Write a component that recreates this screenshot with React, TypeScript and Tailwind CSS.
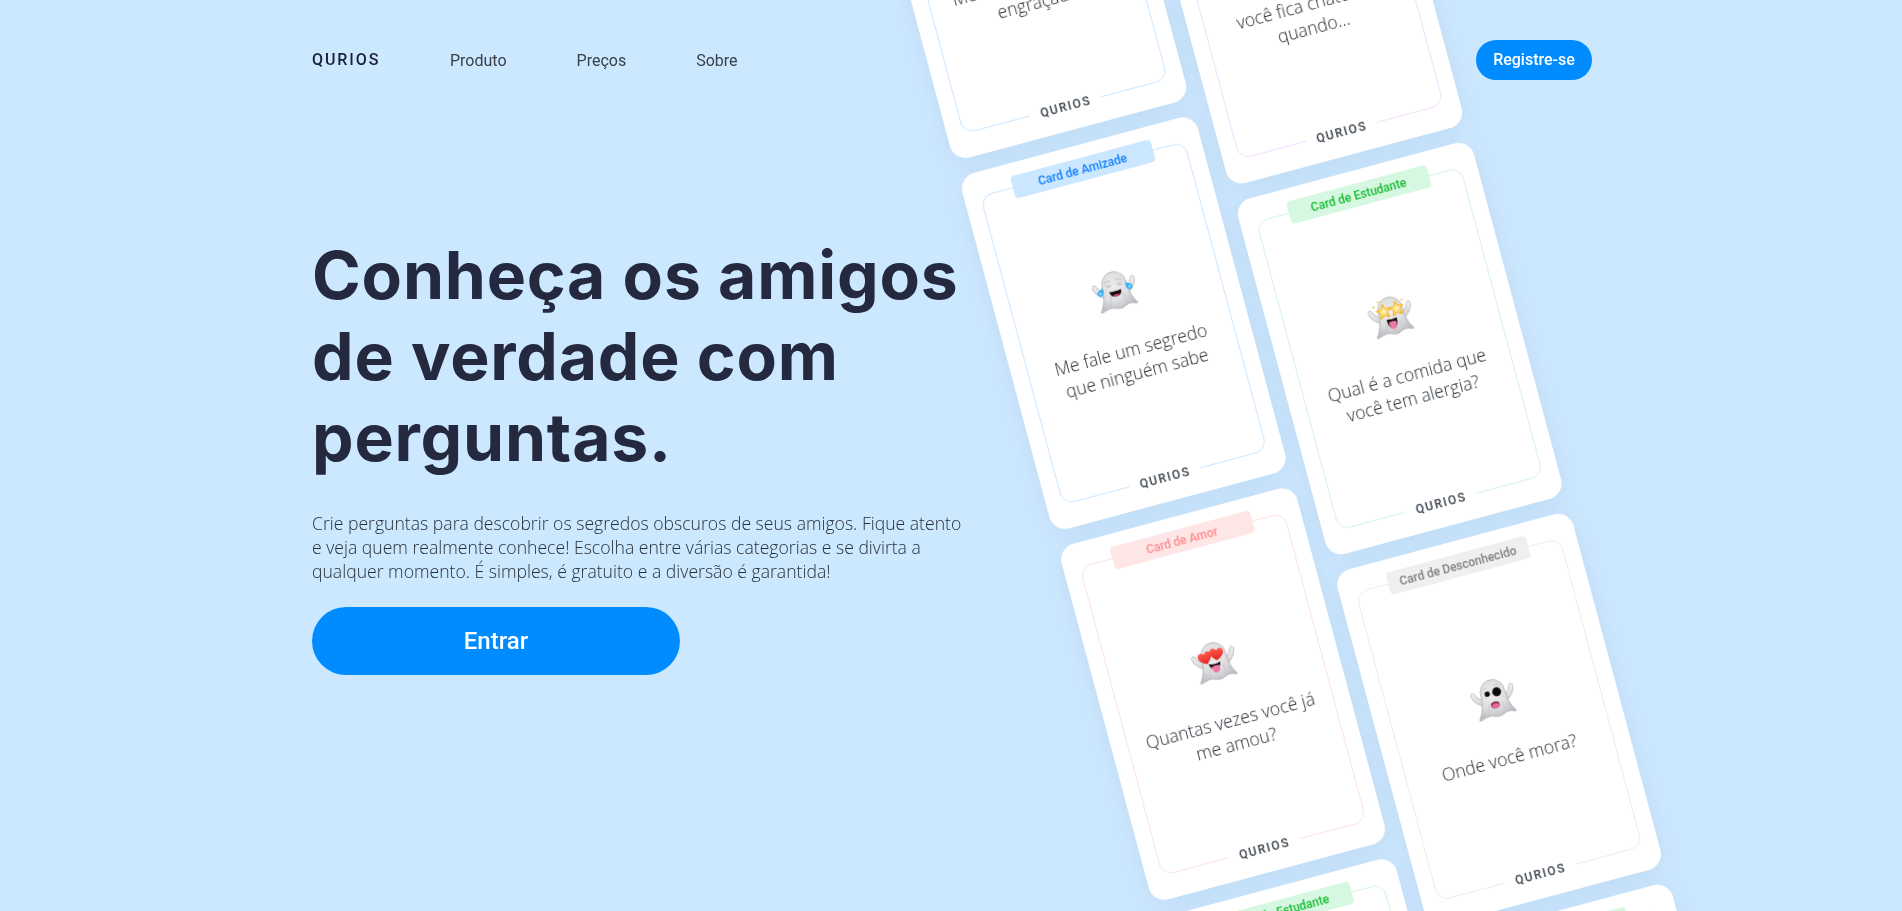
import type { ReactNode } from "react";

type Mood = "laugh" | "stars" | "hearts" | "shock";

type Theme = { label: string; border: string; tag: string };

const themes = {
  friendship: {
    label: "Card de Amizade",
    border: "border-[#c9e6ff]",
    tag: "bg-[#cbe7ff] text-[#1380ff]",
  },
  student: {
    label: "Card de Estudante",
    border: "border-[#d3f6dd]",
    tag: "bg-[#d7f8e0] text-[#17bb35]",
  },
  love: {
    label: "Card de Amor",
    border: "border-[#ffe2e2]",
    tag: "bg-[#ffe6e6] text-[#ff8c8c]",
  },
  stranger: {
    label: "Card de Desconhecido",
    border: "border-[#ededed]",
    tag: "bg-[#efefef] text-[#808080]",
  },
  crush: {
    label: "Card de Crush",
    border: "border-[#f5dcff]",
    tag: "bg-[#f7e3ff] text-[#c56bf0]",
  },
} satisfies Record<string, Theme>;

type CardData = { theme: Theme; mood: Mood; lines: string[] };

const columns: CardData[][] = [
  [
    { theme: themes.friendship, mood: "laugh", lines: ["Mostre uma imagem", "engraçada"] },
    { theme: themes.friendship, mood: "laugh", lines: ["Me fale um segredo", "que ninguém sabe"] },
    { theme: themes.love, mood: "hearts", lines: ["Quantas vezes você já", "me amou?"] },
    { theme: themes.student, mood: "stars", lines: ["Qual é a comida que", "você tem alergia?"] },
  ],
  [
    { theme: themes.crush, mood: "hearts", lines: ["você fica chateado", "quando..."] },
    { theme: themes.student, mood: "stars", lines: ["Qual é a comida que", "você tem alergia?"] },
    { theme: themes.stranger, mood: "shock", lines: ["Onde você mora?"] },
    { theme: themes.student, mood: "stars", lines: ["Qual é a comida que", "você tem alergia?"] },
  ],
];

const star = "M0-7.4 2-2.5 7.2-2.2 3.2 1.2 4.5 6.3 0 3.5-4.5 6.3-3.2 1.2-7.2-2.2-2-2.5Z";
const heart = "M0 6C-3.6 3.8-6.3 1.2-6.3-1.9-6.3-5.6-1.8-6.5 0-3.2 1.8-6.5 6.3-5.6 6.3-1.9 6.3 1.2 3.6 3.8 0 6Z";
const spark = "M0-2 .5-.5 2 0 .5.5 0 2-.5.5-2 0-.5-.5Z";

const faces: Record<Mood, ReactNode> = {
  laugh: (
    <>
      <path
        d="M-8.5-11.6q3-1.6 6-.6M3-12.2q3-1 5.6.8M-8-8.8l5.6 1.4-5.2 1.2M8.6-8.8 3-7.4l5 1.2"
        fill="none"
        stroke="#bcbcc2"
        strokeWidth=".9"
        strokeLinecap="round"
      />
      <path d="M-6-1.8Q0-.8 6.2-1.8 6 4.2.1 4.2T-6-1.8Z" fill="#170b10" />
      <path d="M-3.7 2.8Q0 1.2 3.9 2.8 2.4 4.2.1 4.2T-3.7 2.8Z" fill="#d9486f" />
      <path d="M-11.6-7.6C-13-6-17.6-5.6-18-2.4-18.2.8-14.4 1.6-12.6-.4-11.2-2.2-11.4-5-11.6-7.6Z" fill="#35b0f0" />
      <path d="M11.8-7.6C13.2-6 17.8-5.6 18.2-2.4 18.4.8 14.6 1.6 12.8-.4 11.4-2.2 11.6-5 11.8-7.6Z" fill="#35b0f0" />
      <circle cx="-15" cy="-2.2" r="1.3" fill="#a6e1ff" />
      <circle cx="15.2" cy="-2.2" r="1.3" fill="#a6e1ff" />
    </>
  ),
  stars: (
    <>
      <g fill="url(#starFill)" stroke="#f2b224" strokeWidth=".9" strokeLinejoin="round">
        <path d={star} transform="translate(-5.8 -7.6) scale(1.05)" />
        <path d={star} transform="translate(7.2 -7.6) scale(1.05)" />
      </g>
      <g fill="#f8cf5a">
        <path d={spark} transform="translate(-9 -18.6)" />
        <path d={spark} transform="translate(-14.6 -14.4)" />
        <path d={spark} transform="translate(14.4 -14.8)" />
        <path d={spark} transform="translate(17 -2.4)" />
      </g>
      <path d="M-5.2.8Q0 2 5.2.8 5.4 10.4 0 10.6T-5.2.8Z" fill="#170b10" />
      <path d="M-3.9 4.2Q0 2.8 3.9 4.2 3.8 11.6 0 11.6T-3.9 4.2Z" fill="#ec7ba4" />
    </>
  ),
  hearts: (
    <>
      <g fill="url(#heartFill)">
        <path d={heart} transform="translate(-8.2 -7.4) rotate(-6) scale(1.08)" />
        <path d={heart} transform="translate(4 -8.6) rotate(8) scale(1.08)" />
      </g>
      <path d="M-6.4-.6Q0 2.2 5.6-.4 5 6 0 6.2T-6.4-.6Z" fill="#170b10" />
      <path d="M-4.2 3Q0 1.4 4.2 2.8 4.4 9.6.2 9.6T-4.2 3Z" fill="#ec7ba4" />
    </>
  ),
  shock: (
    <>
      <circle cx="-4.9" cy="-7.6" r="2.6" fill="#0b0b0d" />
      <circle cx="4.8" cy="-7.4" r="4.5" fill="#0b0b0d" />
      <path d="M-8.6-12.6q2-1.6 4-.8M4-14.4q3-.8 5.4 1" fill="none" stroke="#c3c3c8" strokeWidth=".8" />
      <ellipse cx=".2" cy="4.9" rx="4.4" ry="3.4" fill="#7c2345" />
      <ellipse cx=".2" cy="5.7" rx="3.9" ry="2.5" fill="#e76b98" />
    </>
  ),
};

function Ghost({ mood }: { mood: Mood }) {
  return (
    <svg viewBox="-32 -32 64 64" className="size-16" aria-hidden="true">
      <g stroke="#adadb3" strokeWidth=".8" strokeLinejoin="round">
        <path
          d="M-10.5 3.4C-16.4 1.4-20.6-4-21.3-9.2-21.7-12.2-18.2-12.8-17.4-10-16.4-6.8-14.2-4.6-11-3.6Z"
          fill="url(#armFill)"
        />
        <path
          d="M11.5 3.4C17.4 1.4 21.3-4 21.9-9.4 22.2-12.6 18.8-13 18-10.2 17-6.8 15.2-4.6 12-3.6Z"
          fill="url(#armFill)"
        />
        <path
          d="M.8-20.6C8.2-20.6 12.6-15 12.9-8 13.2 1.4 14.6 9.4 18.9 14.6 19.4 15.4 18.8 16 18 15.8 14.4 14.6 12 13.4 9 14.4 6 15.4 4 17 .6 16.8-2.8 16.6-4.6 14.6-7.8 14.6-11.2 14.6-14.4 15.6-17.8 16.8-18.8 17-19.2 16.2-18.6 15.4-14 9.6-11.8 1.4-11.4-8-11.2-15-6.6-20.6.8-20.6Z"
          fill="url(#bodyFill)"
        />
      </g>
      <path
        d="M-8.6 12.6Q-5.8 7.6-6 3M9.4 12.6Q7.4 8 7.8 3.6M1 15.4Q0 13.4.4 11.6"
        fill="none"
        stroke="#c8c8ce"
        strokeWidth="1.1"
        strokeLinecap="round"
      />
      {faces[mood]}
    </svg>
  );
}

function GhostPaints() {
  return (
    <svg className="absolute size-0" aria-hidden="true">
      <defs>
        <radialGradient id="bodyFill" cx=".48" cy=".4" r=".66">
          <stop offset="0" stopColor="#ededee" />
          <stop offset=".55" stopColor="#dfdfe1" />
          <stop offset="1" stopColor="#bdbdc2" />
        </radialGradient>
        <linearGradient id="armFill" x1="0" y1="0" x2="0" y2="1">
          <stop offset="0" stopColor="#f3f3f4" />
          <stop offset="1" stopColor="#d2d2d6" />
        </linearGradient>
        <radialGradient id="starFill">
          <stop offset="0" stopColor="#fff6c4" />
          <stop offset=".45" stopColor="#ffdf78" />
          <stop offset="1" stopColor="#f9b526" />
        </radialGradient>
        <linearGradient id="heartFill" x1="0" y1="0" x2="0" y2="1">
          <stop offset="0" stopColor="#ff5b50" />
          <stop offset="1" stopColor="#e0241f" />
        </linearGradient>
      </defs>
    </svg>
  );
}

function Card({ theme, mood, lines }: CardData) {
  return (
    <article className="h-[368px] w-[244px] shrink-0 rounded-2xl bg-white px-4 py-6">
      <div
        className={`flex h-full flex-col items-center justify-between rounded-xl border ${theme.border}`}
      >
        <span
          className={`-mt-3 flex h-[23px] w-[145px] shrink-0 items-center justify-center rounded text-xs font-medium ${theme.tag}`}
        >
          {theme.label}
        </span>
        <div className="flex flex-col items-center">
          <Ghost mood={mood} />
          <p className="mt-[15px] mb-px text-center font-['Open_Sans',sans-serif] text-[17.6px] leading-6 font-light text-[#252c33]">
            {lines.map((line) => (
              <span key={line} className="block whitespace-nowrap">
                {line}
              </span>
            ))}
          </p>
        </div>
        <span className="-mb-3 flex h-[23px] w-[74px] shrink-0 items-center justify-center bg-white text-xs font-medium tracking-[0.13em] text-[#3a434c]">
          QURIOS
        </span>
      </div>
    </article>
  );
}

export default function App() {
  return (
    <div className="relative h-screen overflow-hidden bg-[#cce8ff] font-[Roboto,sans-serif]">
      <GhostPaints />

      <div className="absolute top-[-285px] left-[1047px] flex h-[1520px] w-[504px] rotate-[-15deg] gap-4 drop-shadow-[0_4px_12px_rgba(30,50,90,0.075)]">
        {columns.map((cards, i) => (
          <div key={i} className="flex flex-col gap-4 even:mt-24">
            {cards.map((card, j) => (
              <Card key={j} {...card} />
            ))}
          </div>
        ))}
      </div>

      <div className="relative mx-auto w-[1280px]">
        <div className="translate-x-px">
          <header className="flex h-[120px] items-center">
            <a className="w-[71px] font-medium tracking-[0.12em] text-[#1c2036]">QURIOS</a>
            <nav className="mt-0.5 ml-[67px] flex gap-[70px] text-[#394047]">
              <a>Produto</a>
              <a>Preços</a>
              <a>Sobre</a>
            </nav>
            <button className="ml-auto h-10 w-[116px] rounded-full bg-[#008cff] font-medium text-white">
              Registre-se
            </button>
          </header>

          <main className="pt-[114.5px]">
            <h1 className="text-[66px] leading-[81px] font-bold tracking-[0.8px] whitespace-nowrap text-[#25293f] font-[Inter,sans-serif]">
              Conheça os amigos
              <br />
              de verdade com
              <br />
              perguntas.
            </h1>
            <p className="mt-[33.5px] font-['Open_Sans',sans-serif] text-[17.6px] leading-6 font-light whitespace-nowrap text-[#283037]">
              Crie perguntas para descobrir os segredos obscuros de seus amigos. Fique atento
              <br />
              e veja quem realmente conhece! Escolha entre várias categorias e se divirta a
              <br />
              qualquer momento. É simples, é gratuito e a diversão é garantida!
            </p>
            <button className="mt-6 h-[68px] w-[368px] rounded-full bg-[#008cff] text-2xl font-medium text-white">
              Entrar
            </button>
          </main>
        </div>
      </div>
    </div>
  );
}
